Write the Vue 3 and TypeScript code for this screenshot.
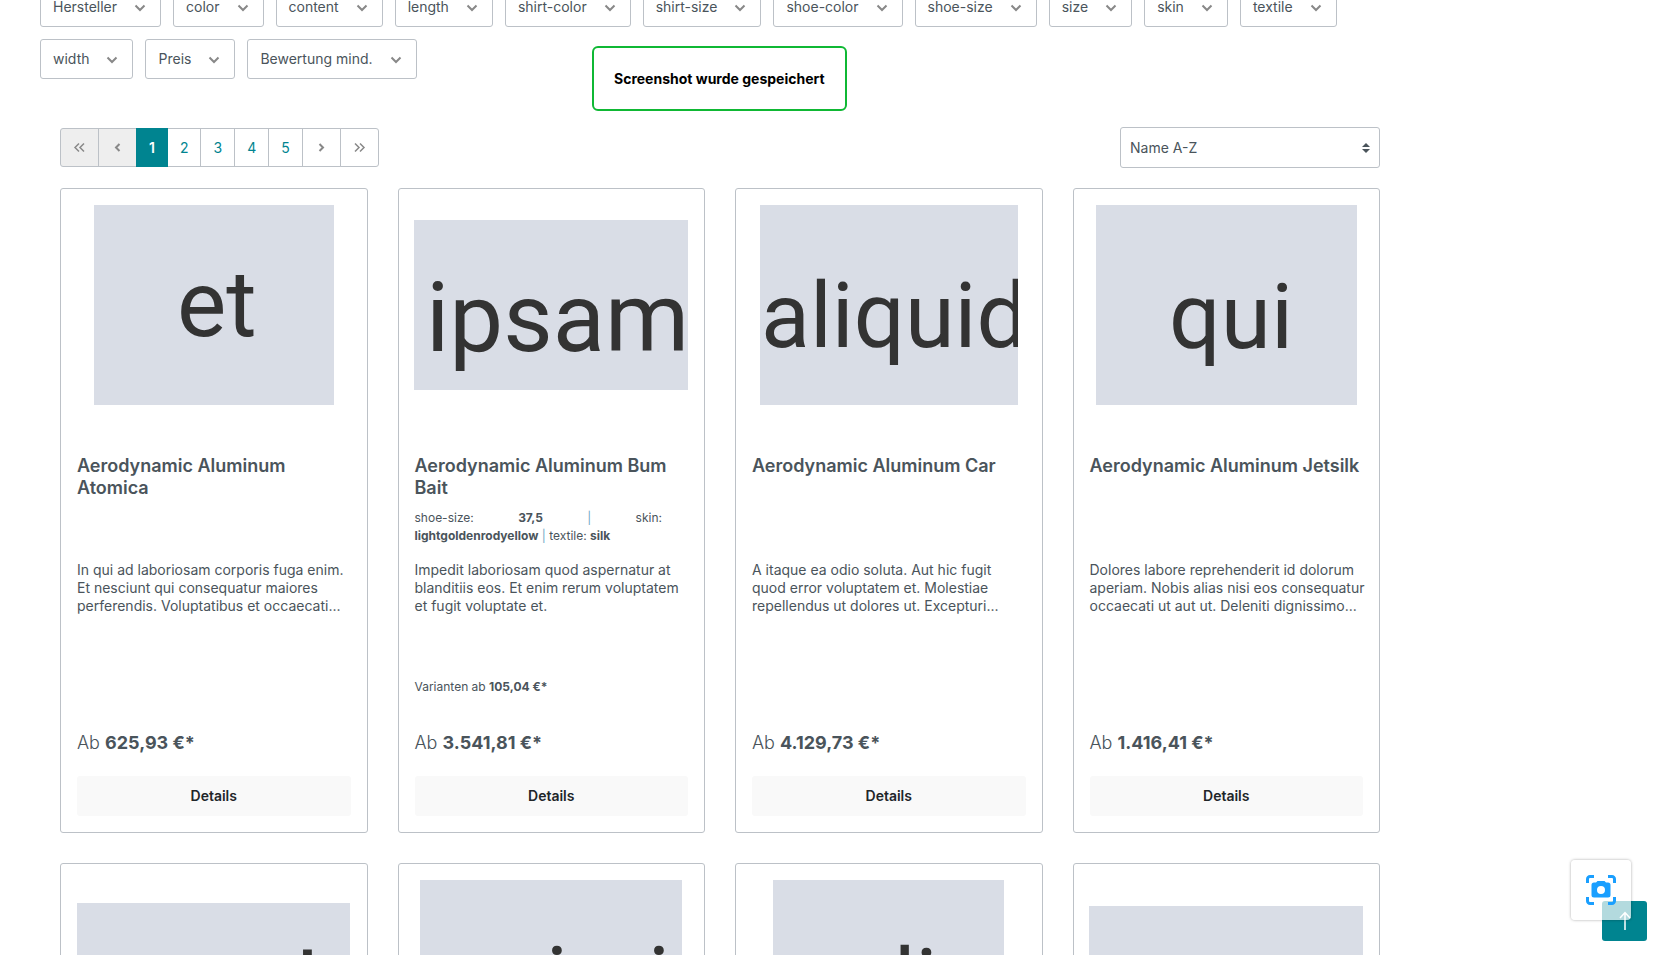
<script setup lang="ts">
import { ref } from 'vue'

interface Placeholder {
  label: string
  width: number
  height: number
  x: number
  y: number
  size: number
}

interface Product {
  id: number
  name: string
  image: Placeholder
  options: { name: string; value: string }[]
  description: string[]
  variantPrice: string
  price: string
}

const filters: string[] = [
  'Hersteller', 'color', 'content', 'length', 'shirt-color', 'shirt-size', 'shoe-color',
  'shoe-size', 'size', 'skin', 'textile', 'width', 'Preis', 'Bewertung mind.',
]

const pages = [1, 2, 3, 4, 5]
const currentPage = ref(1)
const sorting = ref('name-asc')

const products: Product[] = [
  {
    id: 1,
    name: 'Aerodynamic Aluminum Atomica',
    image: { label: 'et', width: 240, height: 200, x: 83, y: 131, size: 93 },
    options: [],
    description: [
      'In qui ad laboriosam corporis fuga enim.',
      'Et nesciunt qui consequatur maiores',
      'perferendis. Voluptatibus et occaecati...',
    ],
    variantPrice: '',
    price: '625,93 €*',
  },
  {
    id: 2,
    name: 'Aerodynamic Aluminum Bum Bait',
    image: { label: 'ipsam', width: 274, height: 170, x: 12, y: 131, size: 96 },
    options: [
      { name: 'shoe-size', value: '37,5' },
      { name: 'skin', value: 'lightgoldenrodyellow' },
      { name: 'textile', value: 'silk' },
    ],
    description: [
      'Impedit laboriosam quod aspernatur at',
      'blanditiis eos. Et enim rerum voluptatem',
      'et fugit voluptate et.',
    ],
    variantPrice: '105,04 €*',
    price: '3.541,81 €*',
  },
  {
    id: 3,
    name: 'Aerodynamic Aluminum Car',
    image: { label: 'aliquid', width: 258, height: 200, x: 1, y: 142, size: 90 },
    options: [],
    description: [
      'A itaque ea odio soluta. Aut hic fugit',
      'quod error voluptatem et. Molestiae',
      'repellendus ut dolores ut. Excepturi...',
    ],
    variantPrice: '',
    price: '4.129,73 €*',
  },
  {
    id: 4,
    name: 'Aerodynamic Aluminum Jetsilk',
    image: { label: 'qui', width: 261, height: 200, x: 73, y: 143, size: 91 },
    options: [],
    description: [
      'Dolores labore reprehenderit id dolorum',
      'aperiam. Nobis alias nisi eos consequatur',
      'occaecati ut aut ut. Deleniti dignissimo...',
    ],
    variantPrice: '',
    price: '1.416,41 €*',
  },
]

const nextImages: Placeholder[] = [
  { label: 'amet', width: 273, height: 154, x: 27, y: 110, size: 97 },
  { label: 'animi', width: 262, height: 200, x: 26, y: 131, size: 91 },
  { label: 'odio', width: 231, height: 200, x: 39, y: 133, size: 91 },
  { label: 'eum', width: 274, height: 148, x: 44, y: 120, size: 97 },
]
</script>

<template>
  <main class="listing">
    <div class="filters">
      <button v-for="filter in filters" :key="filter" type="button" class="filter">
        {{ filter }}
        <svg class="chevron" viewBox="0 0 16 16" aria-hidden="true"><path d="M3.500 6.500L8 11l4.500-4.500" /></svg>
      </button>
    </div>

    <section class="results">
      <div class="toolbar">
        <nav class="pagination" aria-label="Seiten">
          <button type="button" class="page arrow" disabled aria-label="Erste Seite">
            <svg viewBox="0 0 13 13" aria-hidden="true"><path d="M6 2.500L2 6.500l4 4M11 2.500L7 6.500l4 4" /></svg>
          </button>
          <button type="button" class="page arrow" disabled aria-label="Vorherige Seite">
            <svg viewBox="0 0 13 13" aria-hidden="true"><path class="bold" d="M8.500 3L5 6.500L8.500 10" /></svg>
          </button>
          <button
            v-for="page in pages"
            :key="page"
            type="button"
            class="page"
            :class="{ active: page === currentPage }"
            @click="currentPage = page"
          >{{ page }}</button>
          <button type="button" class="page arrow" aria-label="Nächste Seite">
            <svg viewBox="0 0 13 13" aria-hidden="true"><path class="bold" d="M4.500 3L8 6.500L4.500 10" /></svg>
          </button>
          <button type="button" class="page arrow" aria-label="Letzte Seite">
            <svg viewBox="0 0 13 13" aria-hidden="true"><path d="M2 2.500L6 6.500l-4 4M7 2.500L11 6.500l-4 4" /></svg>
          </button>
        </nav>
        <div class="sorting">
          <select v-model="sorting" aria-label="Sortierung">
            <option value="name-asc">Name A-Z</option>
            <option value="name-desc">Name Z-A</option>
          </select>
          <svg class="sort-icon" viewBox="0 0 8 10" aria-hidden="true"><path d="M4 0l4 4H0zM4 10l4-4H0z" /></svg>
        </div>
      </div>

      <div class="grid">
        <article v-for="product in products" :key="product.id" class="card">
          <div class="media">
            <svg :width="product.image.width" :height="product.image.height" role="img">
              <text :x="product.image.x" :y="product.image.y" :font-size="product.image.size">{{ product.image.label }}</text>
            </svg>
          </div>
          <a href="#" class="name">{{ product.name }}</a>
          <div class="options">
            <template v-if="product.options.length === 3">
              <div class="options-row">
                <span>{{ product.options[0].name }}:</span>
                <b>{{ product.options[0].value }}</b>
                <span class="divider">|</span>
                <span>{{ product.options[1].name }}:</span>
              </div>
              <div>
                <b>{{ product.options[1].value }}</b>
                <span class="divider"> | </span>
                <span>{{ product.options[2].name }}: </span>
                <b>{{ product.options[2].value }}</b>
              </div>
            </template>
          </div>
          <p class="description">{{ product.description.join('\n') }}</p>
          <p class="variant-price">
            <template v-if="product.variantPrice">Varianten ab <b>{{ product.variantPrice }}</b></template>
          </p>
          <p class="price">Ab <b>{{ product.price }}</b></p>
          <button type="button" class="details">Details</button>
        </article>
        <article v-for="image in nextImages" :key="image.label" class="card">
          <div class="media">
            <svg :width="image.width" :height="image.height" role="img">
              <text :x="image.x" :y="image.y" :font-size="image.size">{{ image.label }}</text>
            </svg>
          </div>
        </article>
      </div>
    </section>

    <div class="toast" role="status">Screenshot wurde gespeichert</div>

    <button type="button" class="scroll-up" aria-label="Nach oben">
      <svg viewBox="0 0 20 22" aria-hidden="true"><path d="M10 20V3M5 8l5-5.500L15 8" /></svg>
    </button>
    <button type="button" class="capture" aria-label="Screenshot">
      <svg viewBox="0 0 30 30" aria-hidden="true">
        <path class="frame" d="M1.500 8V4A2.500 2.500 0 0 1 4 1.500H8M22 1.500h4A2.500 2.500 0 0 1 28.500 4v4M28.500 22v4a2.500 2.500 0 0 1-2.500 2.500h-4M8 28.500H4A2.500 2.500 0 0 1 1.500 26v-4" />
        <path class="body" fill-rule="evenodd" d="M8 7.500h2L11.500 6h7L20 7.500h2a2.500 2.500 0 0 1 2.500 2.500v10a2.500 2.500 0 0 1-2.500 2.500H8A2.500 2.500 0 0 1 5.500 20V10A2.500 2.500 0 0 1 8 7.500zM15 11a4 4 0 1 0 0 8 4 4 0 0 0 0-8z" />
      </svg>
    </button>
  </main>
</template>

<style>
html,
body {
  height: 100%;
  overflow: hidden;
  background: #fff;
}
</style>

<style scoped>
.listing {
  max-width: 1360px;
  margin: -13px 0 0;
  padding: 0 20px 0 40px;
  font-family: Inter, "Liberation Sans", sans-serif;
  font-size: 14px;
  font-weight: 400;
  line-height: 18px;
  color: #4a545b;
}

.listing * {
  box-sizing: border-box;
}

button,
select {
  font: inherit;
  color: inherit;
  background: #fff;
  border: 1px solid #bcc1c7;
  border-radius: 3px;
}

.filters {
  display: flex;
  flex-wrap: wrap;
  gap: 12px;
}

.filter {
  display: flex;
  align-items: center;
  gap: 15px;
  height: 40px;
  padding: 0 12px;
}

.chevron {
  width: 16px;
  height: 16px;
  fill: none;
  stroke: #888;
  stroke-width: 2;
}

.results {
  padding: 48px 20px 0;
}

.toolbar {
  display: flex;
  justify-content: space-between;
  align-items: center;
  margin-bottom: 20px;
}

.pagination {
  display: flex;
}

.page {
  height: 39px;
  padding: 0 12px;
  margin-left: -1px;
  border-radius: 0;
  color: #008490;
}

.page:first-child {
  margin-left: 0;
  border-radius: 3px 0 0 3px;
}

.page:last-child {
  border-radius: 0 3px 3px 0;
}

.page:disabled {
  background: #eee;
}

.page.active {
  position: relative;
  background: #008490;
  border-color: #008490;
  color: #fff;
  font-weight: 600;
}

.arrow svg {
  display: block;
  width: 13px;
  height: 13px;
  fill: none;
  stroke: #888;
  stroke-width: 1.5;
}

.arrow .bold {
  stroke-width: 2;
}

.sorting {
  position: relative;
  width: 260px;
}

select {
  display: block;
  width: 100%;
  height: 41px;
  padding: 0 9px;
  appearance: none;
}

.sort-icon {
  position: absolute;
  right: 10px;
  top: 16px;
  width: 8px;
  height: 10px;
  fill: #4a545b;
  pointer-events: none;
}

.grid {
  display: grid;
  grid-template-columns: repeat(4, minmax(0, 1fr));
  gap: 30px;
}

.card {
  display: flex;
  flex-direction: column;
  padding: 16px;
  border: 1px solid #bcc1c7;
  border-radius: 3px;
}

.card p {
  margin: 0;
}

.media {
  display: flex;
  align-items: center;
  justify-content: center;
  height: 200px;
  margin-bottom: 50px;
}

.media svg {
  flex: none;
  overflow: hidden;
  background: #d9dde6;
  fill: #333;
  font-family: Roboto, sans-serif;
}

.name {
  height: 44px;
  margin-bottom: 10px;
  font-size: 18px;
  line-height: 22px;
  font-weight: 600;
  color: inherit;
  text-decoration: none;
}

.options {
  height: 36px;
  margin-bottom: 16px;
  font-size: 12px;
}

.options-row {
  display: flex;
  justify-content: space-between;
  padding-right: 26px;
}

b {
  font-weight: 700;
}

.divider {
  color: #6fa9c6;
}

.description {
  min-height: 54px;
  white-space: pre;
}

.card .variant-price {
  height: 18px;
  margin: 63px 0 36px;
  font-size: 12px;
}

.card .price {
  margin-bottom: 22px;
  font-size: 18px;
  font-weight: 300;
  line-height: 22px;
}

.details {
  height: 40px;
  border: 0;
  background: #f9f9f9;
  color: #212529;
  font-weight: 600;
}

.toast {
  position: fixed;
  top: 46px;
  left: 592px;
  padding: 22px 20px;
  border: 2px solid #0fb834;
  border-radius: 6px;
  background: #fff;
  color: #000;
  font-weight: 700;
  line-height: 17px;
}

.scroll-up {
  position: fixed;
  right: 15px;
  bottom: 14px;
  display: grid;
  place-items: center;
  width: 45px;
  height: 40px;
  padding: 0;
  border: 0;
  background: #008490;
}

.scroll-up svg {
  width: 20px;
  height: 22px;
  fill: none;
  stroke: #fff;
  stroke-width: 1.5;
}

.capture {
  position: fixed;
  right: 31px;
  bottom: 35px;
  display: grid;
  place-items: center;
  width: 60px;
  height: 60px;
  padding: 0;
  border: 0;
  border-radius: 4px;
  background: rgba(255, 255, 255, 0.7);
  box-shadow: 0 0 3px rgba(0, 0, 0, 0.35);
}

.capture svg {
  width: 30px;
  height: 30px;
}

.frame {
  fill: none;
  stroke: #1a9fff;
  stroke-width: 3;
}

.body {
  fill: #1a9fff;
}
</style>
